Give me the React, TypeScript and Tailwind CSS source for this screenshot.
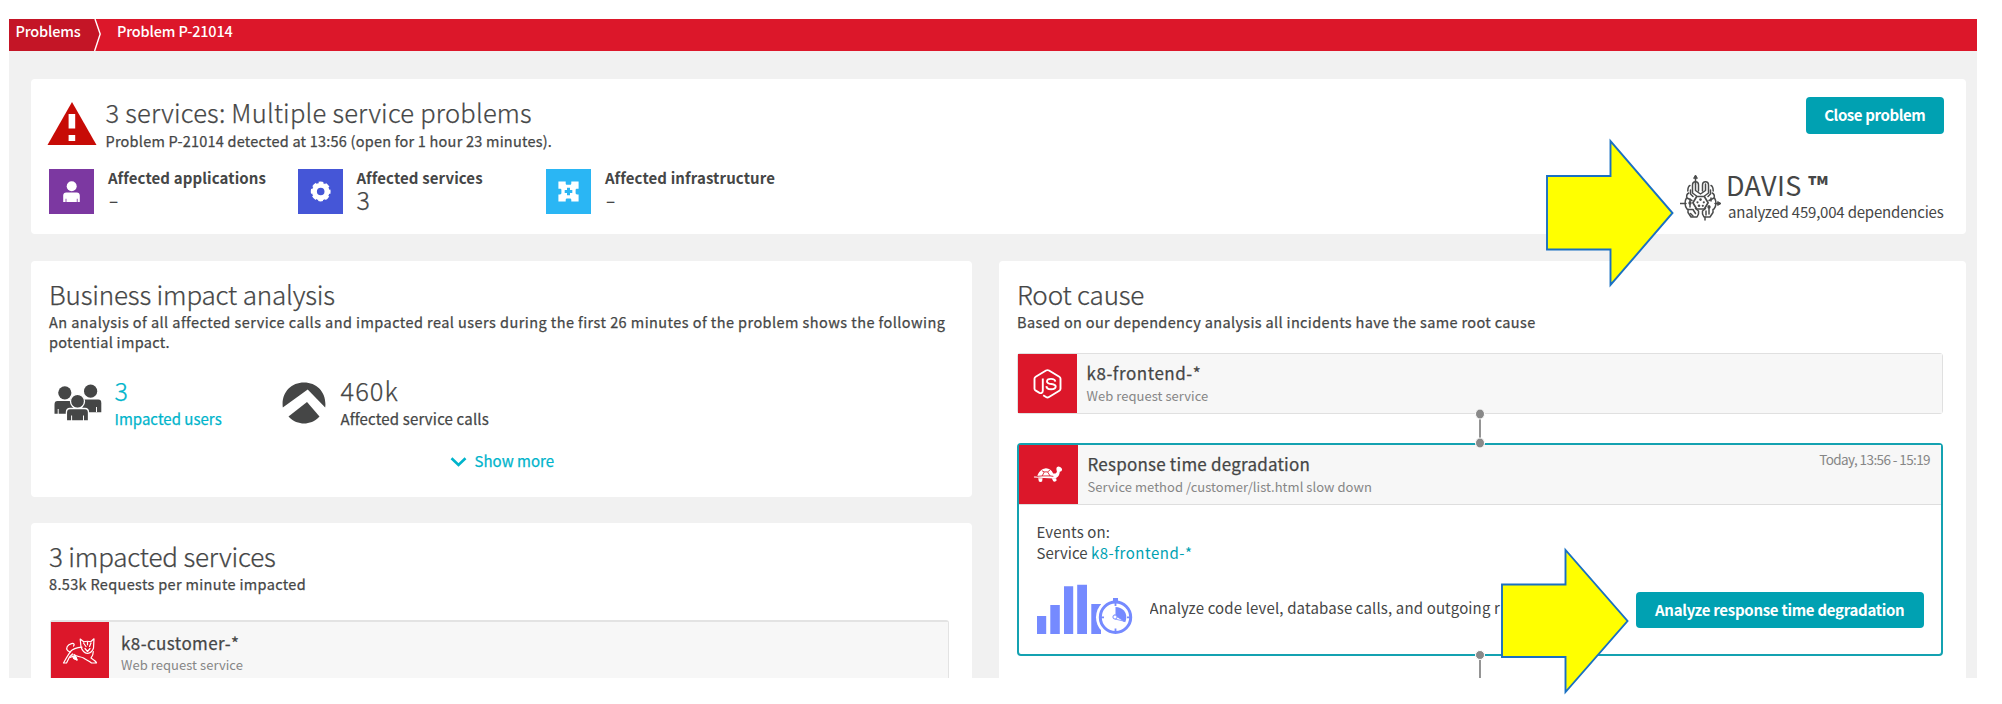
import type { ReactNode } from "react";

function WarningIcon() {
  return (
    <svg className="h-[43px] w-[50px] shrink-0" viewBox="0 0 50 43">
      <path d="M25 0 49.5 43H.5Z" fill="#c70b06" />
      <path d="M21.6 12h6.6v14.5h-6.6zM21.6 33h6.6v6h-6.6z" fill="#fff" />
    </svg>
  );
}

function PersonIcon() {
  return (
    <svg className="size-[45px]" viewBox="0 0 45 45" fill="#fff">
      <circle cx="22.7" cy="17.3" r="5" />
      <path d="M14.2 33v-6.5c0-1.8 1.2-3 3-3h10.6c1.8 0 3 1.2 3 3V33h-2.2v-3.3h-.8V33H17.4v-3.3h-.8V33Z" />
    </svg>
  );
}

function GearIcon() {
  return (
    <svg className="size-[45px]" viewBox="0 0 45 45">
      <circle cx="22.7" cy="22.5" r="6.3" fill="none" stroke="#fff" strokeWidth="5" />
      <circle cx="22.7" cy="22.5" r="8.5" fill="none" stroke="#fff" strokeWidth="2.8" strokeDasharray="4.4 2.276" strokeDashoffset="2.2" />
    </svg>
  );
}

function InfrastructureIcon() {
  return (
    <svg className="size-[45px]" viewBox="0 0 45 45">
      <path
        fill="#fff"
        d="M12.400 12.500h7.300v1.700c0 1 .5 1.500 1.300 1.500h3c.8 0 1.300-.5 1.300-1.500v-1.700h7.300v7.300h-1.500c-1 0-1.500.5-1.500 1.300v3c0 .8.5 1.300 1.500 1.300h1.500v7.200h-7.300v-1.500c0-1-.5-1.500-1.300-1.500h-3c-.8 0-1.300.5-1.300 1.500v1.500h-7.300v-7.200h1.500c1 0 1.500-.5 1.500-1.300v-3c0-.8-.5-1.300-1.500-1.300h-1.500Z"
      />
      <path d="M22.5 18.700v7.600M18.700 22.500h7.600" stroke="#2ab6f4" strokeWidth="3" />
    </svg>
  );
}

function BrainIcon() {
  return (
    <svg className="h-[47px] w-[42px] shrink-0" viewBox="0 0 42 47" fill="none" stroke="#4b4c4c" strokeWidth="1.5" strokeLinejoin="round" strokeLinecap="round">
      <path d="M15.500 3v7M0 29.500h6M35 29.500h5" />
      <path d="m13.800 4 1.700-3 1.700 3ZM38 27.800l3 1.700-3 1.700Z" fill="#4b4c4c" strokeWidth="1" />
      <path d="M18.500 17v-6c0-4.500-6-4.500-6 0v8l4 3M22.500 17v-6c0-4.500 6-4.500 6 0v8l-4 3" />
      <path d="M15.500 10v6.500l5 3.500 5-3.500V10" />
      <path d="M10 11.500c-2.200 1-2.200 3-2.200 5.500M8.800 19c-2 1-2.500 3-1.800 5l5 2.500M31 11.500c2.200 1 2.200 3 2.200 5.500M32.200 19c2 1 2.500 3 1.800 5l-5 2.500" />
      <path d="M10.500 16v4l2.500 2.500M30.500 16v4L28 22.500" />
      <path d="M16.700 22.500h7.600l3.800 6.300-3.800 6.200h-7.600l-3.800-6.200Z" strokeWidth="1.700" />
      <path d="M6.500 24c-2 3-2 8 .5 11l1 .500v3l3 4.500h6l1.500-3v-3l-3-2.500M34.500 24c2 3 2 8-.5 11l-1 .5v3L30 43h-6l-1.500-3v-3l3-2.500" />
      <path d="M10 25v8M8 35.500h5l2.500 4M10.500 39.500 13 42M31 27v-3M29 32v8M26 37v4M25 43v3" />
      <g fill="#4b4c4c" stroke="none">
        <circle cx="20.500" cy="25.600" r="1.300" />
        <circle cx="17.500" cy="28.300" r="1.100" />
        <circle cx="23.800" cy="28.300" r="1.100" />
        <circle cx="19" cy="31.800" r="1.300" />
        <circle cx="22.800" cy="31.800" r="1.100" />
        <circle cx="10" cy="29" r="1.700" />
        <circle cx="29" cy="33" r="1.700" />
      </g>
    </svg>
  );
}

function UsersIcon() {
  const body = "M0 8V4C0 1.500 1 .5 3 .5h13c2 0 3 1 3 3.500v8.500H0Z";
  return (
    <svg className="h-[38px] w-[50px] shrink-0" viewBox="0 0 50 38" fill="#454646">
      <circle cx="11.800" cy="8.800" r="6.600" />
      <circle cx="37.600" cy="7.200" r="6.600" />
      <path d={body} transform="translate(1.500 16.500) scale(1 1.050)" />
      <path d={body} transform="translate(29.300 15) scale(1 1.050)" />
      <path d="M5.200 30v-5M43.500 28v-5" stroke="#fff" />
      <g stroke="#fff" strokeWidth="1.300">
        <circle cx="24.500" cy="17.300" r="7" />
        <path d="M13.400 37V28.500c0-2.500 1-4 3.500-4H32c2.500 0 3.500 1.500 3.500 4V37Z" />
      </g>
      <path d="M18.600 37v-5.500M30.500 37v-5.500" stroke="#fff" />
    </svg>
  );
}

function ServiceCallsIcon() {
  return (
    <svg className="h-[42px] w-[44px] shrink-0" viewBox="0 0 44 42" fill="#454646">
      <path d="M.8 25.500C-1 11 8.500.5 22 .5S45 11 43.200 25.500L25.700 7.500Z" />
      <path d="M6.500 34.500 25 20l12.500 14.500C33 39.500 27 41.500 22 41.500s-11-2-15.500-7Z" />
    </svg>
  );
}

function NodeJsIcon() {
  return (
    <svg className="h-[32px] w-[29px]" viewBox="0 0 29 32" fill="none" stroke="#fff" strokeWidth="1.900" strokeLinejoin="round">
      <path d="M9.800 10.500v12.300c0 2-1.800 2.800-3.300 2L2.800 22.700c-.9-.5-1.300-1.100-1.300-2v-10c0-.9.400-1.500 1.200-2L13 2.500c1-.5 2-.5 3 0l10.300 6.200c.8.500 1.200 1.100 1.200 2v10c0 .9-.4 1.500-1.200 2L16 29c-1 .6-2 .6-3 0l-2.800-1.700" />
      <path d="M22.300 13.600c-.2-2-1.700-2.700-4.300-2.700-2.800 0-4 .8-4 2.500 0 4 8.700 1.300 8.700 5.200 0 1.900-1.700 2.700-4.600 2.700-3 0-4.600-1-4.700-3.200" />
    </svg>
  );
}

function TurtleIcon() {
  return (
    <svg className="h-[17px] w-[30px]" viewBox="0 0 32 18" fill="#fff">
      <path d="M4.500 11C6 6 9 3 13 2.500c4-.4 7 2 8.500 5.300 1.500.6 3.500.2 4-1.800l-.6-3c.2-2 1.800-2.700 3.200-2.300C30 1.200 31 2.500 31 4c-.2 1.500-1.200 1.800-2.500 2 0 3.500-2 6.700-6 7.200L1 12.300V11.200Z" />
      <path d="M5.500 13h4.700l-.5 3.500c-1 .6-2.500.6-3.400 0ZM20 13h4.700l.5 2.500c-.8 1.300-2.500 1.500-3.600.7Z" />
      <path d="m9.500 5 2.500 1.200h3.500L18 4.500M12 6.200 9.800 10.500M15.500 6.200l2.700 4.300M4 11l5.800-.5h8.400l3.500.5" stroke="#dc172a" strokeWidth=".9" fill="none" />
    </svg>
  );
}

function TomcatIcon() {
  return (
    <svg className="h-[27px] w-[36px]" viewBox="0 0 36 27" fill="none" stroke="#fff" strokeWidth="1.200" strokeLinejoin="round" strokeLinecap="round">
      <path d="M11.500 8C13 6.500 12 5 9.500 5.600 5.500 6.700 3.500 10 5.500 12.500l2.700 1.700C6 17 3.500 21.500 1.500 25h3l3-6 3-3" />
      <path d="M8 14C11 10.500 15 9.500 20 9.200M12 16.500c2.500 2.300 7 2 9.500 3.500 3 2 6 3.300 8 5l5-.2c-1-2.300-3.500-3.500-5.500-4.800 1.500-1.700 2.300-4 2.300-6.500" />
      <path d="m19 9-.8-8 3.500 2.800c2.500-.7 5-.7 7 0L32 .8l-.5 9.200c-1 3.500-3.500 5-6 5.500C22.500 15 20 12 19 9Z" />
      <path d="m21.500 5 2.500 3.500M29 5l-1.500 3.500M25.500 3.800v3M23 10.500l2.500 3 2.500-3M8 19.500l5-2 2 4.500-3.500-1.500" />
      <path d="m10 18 4 1 1 3-3-1.500Z" fill="#fff" />
    </svg>
  );
}

function AnalysisIcon() {
  return (
    <svg className="h-[51px] w-[97px] shrink-0" viewBox="0 0 97 51">
      <path fill="#758aff" d="M0 32h9.200v18H0zM13.300 21h9.500v29h-9.500zM27 2.300h9.200V50H27zM40.200.8H50V50h-9.800zM54.300 20H64v30h-9.700z" />
      <circle cx="78.500" cy="33.300" r="19.500" fill="#fff" />
      <path fill="#758aff" d="M76 14h5v3.500h-5z" />
      <circle cx="78.500" cy="33.300" r="15.200" fill="none" stroke="#758aff" strokeWidth="3" />
      <path d="M78.500 17.500v4.500M78.500 44.500V49M63 33.300h4M90 33.300h4" stroke="#758aff" strokeWidth="1.800" />
      <path fill="#758aff" d="M78.500 23c7 .3 11 5 10.800 10.500-.1 2-.6 3.800-1.200 4.800l-9.600-5Z" />
      <path d="M77.500 31 87 37.200l-9-2.200Z" fill="#fff" stroke="#758aff" strokeWidth=".8" />
      <circle cx="78" cy="33" r="2.100" fill="#fff" stroke="#758aff" />
    </svg>
  );
}

function PointerArrow({ className }: { className: string }) {
  return (
    <svg className={className} viewBox="0 0 130 148" preserveAspectRatio="none">
      <path d="M2 37.500h63.500V3L127.500 74 65.500 145v-35H2Z" fill="#ff0" stroke="#1a70c2" strokeWidth="1.900" />
    </svg>
  );
}

function Affected({ icon, color, label, value }: { icon: ReactNode; color: string; label: string; value?: string }) {
  return (
    <div className="flex w-[248.500px] gap-[14px]">
      <div className={`size-[45px] shrink-0 ${color}`}>{icon}</div>
      <div className="-mt-[1px] whitespace-nowrap">
        <div className="text-[15px] leading-5 font-bold tracking-[0.110px]">{label}</div>
        {value ? (
          <div className="text-[25px] leading-[22px] font-light [-webkit-text-stroke:0.250px]">{value}</div>
        ) : (
          <div className="pl-px text-[17px] leading-[23px] font-medium">–</div>
        )}
      </div>
    </div>
  );
}

function SectionTitle({ children }: { children: ReactNode }) {
  return (
    <h2 className="text-[26px] leading-[34px] font-light tracking-[-0.170px] whitespace-nowrap [-webkit-text-stroke:0.250px]">{children}</h2>
  );
}

function EntityHeader({ icon, title, subtitle, note }: { icon: ReactNode; title: ReactNode; subtitle: string; note?: string }) {
  return (
    <div className="flex h-[59px] bg-[#f7f7f7]">
      <div className="flex w-[58.500px] shrink-0 items-center justify-center bg-[#dc172a]">{icon}</div>
      <div className="ml-[10px] pt-[7.500px] whitespace-nowrap">
        <div className="text-[17px] leading-[22px] tracking-[0.220px] [-webkit-text-stroke:0.250px]">{title}</div>
        <div className="mt-1 text-[13px] leading-4 tracking-[0.040px] text-[#868686]">{subtitle}</div>
      </div>
      {note && <div className="mt-[3.500px] mr-[11px] ml-auto text-[13.500px] leading-5 tracking-[-0.600px] text-[#868686]">{note}</div>}
    </div>
  );
}

export default function App() {
  return (
    <div className="relative h-[704px] w-[2002px] overflow-hidden bg-white pt-[19px] pl-[8.500px] font-['Noto_Sans_CJK_SC','Noto_Sans',sans-serif] text-[#454646]">
      <div className="h-[659px] w-[1968px] overflow-hidden bg-[#f1f1f1]">
        <nav className="flex h-8 bg-[#dc172a] text-[14.500px] leading-[23px] font-medium whitespace-nowrap text-white">
          <div className="w-[85px] bg-[#c41526] pl-[7px] tracking-[-0.170px]">Problems</div>
          <svg className="h-8 w-[8px]" viewBox="0 0 8 32">
            <path d="M0 0h.8L6 15.500.3 32H0Z" fill="#c41526" />
            <path d="M1 0l5.200 15L.6 32" fill="none" stroke="#fff" strokeWidth="1.400" />
          </svg>
          <div className="pl-[15.500px] tracking-[-0.160px]">Problem P-21014</div>
        </nav>

        <main className="px-[22.500px] pt-[28px]">
          <section className="flex h-[155px] w-[1935px] justify-between rounded bg-white pr-[22.500px] pl-[15.500px]">
            <div className="pt-[15px]">
              <div className="flex gap-[9px]">
                <div className="pt-[8px]">
                  <WarningIcon />
                </div>
                <div className="whitespace-nowrap">
                  <h1 className="mt-[0.500px] text-[25.500px] leading-[34px] font-light tracking-[0.230px] [-webkit-text-stroke:0.250px]">
                    3 services: Multiple service problems
                  </h1>
                  <p className="mt-[2px] text-[14.500px] leading-5 tracking-[0.225px] [-webkit-text-stroke:0.250px]">
                    Problem P-21014 detected at 13:56 (open for 1 hour 23 minutes).
                  </p>
                </div>
              </div>
              <div className="mt-[18.500px] ml-[2.500px] flex">
                <Affected icon={<PersonIcon />} color="bg-[#7c38a1]" label="Affected applications" />
                <Affected icon={<GearIcon />} color="bg-[#4556d7]" label="Affected services" value="3" />
                <Affected icon={<InfrastructureIcon />} color="bg-[#2ab6f4]" label="Affected infrastructure" />
              </div>
            </div>
            <div className="flex flex-col items-end pt-[18px]">
              <button className="h-[36.500px] w-[137.500px] rounded bg-[#00a1b2] text-[15px] leading-5 font-bold tracking-[-0.400px] whitespace-nowrap text-white">
                Close problem
              </button>
              <div className="mt-[37.500px] flex gap-[6px]">
                <div className="pt-[3px]">
                  <BrainIcon />
                </div>
                <div className="whitespace-nowrap">
                  <div className="-ml-[2px] text-[27px] leading-7 tracking-[0.400px]">
                    DAVIS <span className="text-[26px] font-bold">™</span>
                  </div>
                  <div className="mt-[2.500px] text-[15px] leading-5 tracking-[-0.200px]">analyzed 459,004 dependencies</div>
                </div>
              </div>
            </div>
          </section>

          <div className="mt-[27px] flex w-[1935px] gap-[27px]">
            <div className="flex w-[941px] flex-col gap-[26px]">
              <section className="h-[235.500px] rounded bg-white pt-4 pl-[18px]">
                <SectionTitle>Business impact analysis</SectionTitle>
                <p className="mt-px text-[14.500px] leading-5 tracking-[0.440px] whitespace-nowrap [-webkit-text-stroke:0.250px]">
                  An analysis of all affected service calls and impacted real users during the first 26 minutes of the problem shows the following
                  <br />
                  <span className="tracking-[0.300px]">potential impact.</span>
                </p>
                <div className="mt-[23.500px] flex pl-[4px]">
                  <div className="flex w-[229px] gap-[11.500px] text-[#00b4cb]">
                    <div className="pt-[8.500px]">
                      <UsersIcon />
                    </div>
                    <div className="whitespace-nowrap">
                      <div className="text-[25px] leading-7 font-light [-webkit-text-stroke:0.250px]">3</div>
                      <div className="mt-[5px] text-[15px] leading-5 tracking-[0.020px] [-webkit-text-stroke:0.250px]">Impacted users</div>
                    </div>
                  </div>
                  <div className="flex gap-[14.500px]">
                    <div className="pt-[6.500px]">
                      <ServiceCallsIcon />
                    </div>
                    <div className="whitespace-nowrap">
                      <div className="text-[25.500px] leading-7 font-light tracking-[1px] [-webkit-text-stroke:0.250px]">460k</div>
                      <div className="mt-[5px] text-[15px] leading-5 tracking-[0.170px] [-webkit-text-stroke:0.250px]">Affected service calls</div>
                    </div>
                  </div>
                </div>
                <a className="mt-[22px] ml-[401px] flex gap-[7.500px] text-[15px] leading-5 tracking-[0.020px] text-[#00b4cb] [-webkit-text-stroke:0.250px]">
                  <svg className="mt-[5px] h-[12px] w-[17px]" viewBox="0 0 17 12">
                    <path d="m1.500 2.300 7 6.700 7-6.700" fill="none" stroke="currentColor" strokeWidth="2.600" />
                  </svg>
                  Show more
                </a>
              </section>

              <section className="h-[200px] rounded bg-white pt-[16px] pr-[23px] pl-[18px]">
                <SectionTitle>3 impacted services</SectionTitle>
                <p className="mt-[1.500px] text-[14.500px] leading-5 tracking-[0.340px] whitespace-nowrap [-webkit-text-stroke:0.250px]">
                  8.53k Requests per minute impacted
                </p>
                <div className="mt-[26px] ml-[0.500px] rounded-[3px] border border-t-2 border-[#e3e3e3]">
                  <div className="flex h-[64px] bg-[#f7f7f7]">
                    <div className="flex w-[58.500px] justify-center bg-[#dc172a] pt-[16px]">
                      <TomcatIcon />
                    </div>
                    <div className="ml-[12px] pt-[9.500px] whitespace-nowrap">
                      <div className="text-[17px] leading-[22px] tracking-[0.420px] [-webkit-text-stroke:0.250px]">k8-customer-*</div>
                      <div className="mt-[3px] text-[13px] leading-4 tracking-[0.050px] text-[#868686]">Web request service</div>
                    </div>
                  </div>
                </div>
              </section>
            </div>

            <section className="h-[460px] w-[967px] rounded bg-white pt-4 pr-[23px] pl-[18px]">
              <SectionTitle>Root cause</SectionTitle>
              <p className="mt-px text-[14.500px] leading-5 tracking-[0.355px] whitespace-nowrap [-webkit-text-stroke:0.250px]">
                Based on our dependency analysis all incidents have the same root cause
              </p>
              <div className="mt-[21px] rounded-[3px] border border-[#e0e0e0]">
                <EntityHeader icon={<NodeJsIcon />} title={<span className="tracking-[0.550px]">k8-frontend-*</span>} subtitle="Web request service" />
              </div>
              <div className="relative z-10 -my-[5px] flex h-[39px] justify-center">
                <svg className="h-[39px] w-[14px]" viewBox="0 0 14 39">
                  <path d="M7 5v29" stroke="#898989" strokeWidth="1.800" />
                  <g fill="#898989" stroke="#fff" strokeWidth="1">
                    <ellipse cx="7" cy="5" rx="4.500" ry="5" />
                    <ellipse cx="7" cy="34" rx="4.500" ry="5" />
                  </g>
                </svg>
              </div>
              <div className="h-[212.500px] rounded border-2 border-[#14a2b1]">
                <div className="border-b border-[#dedede]">
                  <EntityHeader
                    icon={<TurtleIcon />}
                    title="Response time degradation"
                    subtitle="Service method /customer/list.html slow down"
                    note="Today, 13:56 - 15:19"
                  />
                </div>
                <div className="pt-[16px] pr-[17.500px] pl-[17.500px] text-[15px] leading-[21px] whitespace-nowrap">
                  <div className="tracking-[0.150px]">Events on:</div>
                  <div>
                    Service <span className="tracking-[0.500px] text-[#00a1b2]">k8-frontend-*</span>
                  </div>
                  <div className="mt-[21px] flex">
                    <AnalysisIcon />
                    <span className="mt-[13px] ml-[16px] w-[360px] shrink-0 overflow-hidden tracking-[0.140px]">
                      Analyze code level, database calls, and outgoing r
                    </span>
                    <button className="mt-[8px] ml-auto h-[36px] w-[287.500px] rounded bg-[#00a1b2] leading-5 font-bold tracking-[-0.290px] text-white">
                      Analyze response time degradation
                    </button>
                  </div>
                </div>
              </div>
              <div className="relative -mt-[6px] flex justify-center">
                <svg className="h-[29px] w-[14px]" viewBox="0 0 14 29">
                  <path d="M7 5v24" stroke="#898989" strokeWidth="1.800" />
                  <circle cx="7" cy="5" r="4.500" fill="#898989" stroke="#fff" />
                </svg>
              </div>
            </section>
          </div>
        </main>
      </div>

      <PointerArrow className="absolute top-[138px] left-[1545px] z-20 h-[150px] w-[130px]" />
      <PointerArrow className="absolute top-[547px] left-[1500px] z-20 h-[148px] w-[130px]" />
    </div>
  );
}
